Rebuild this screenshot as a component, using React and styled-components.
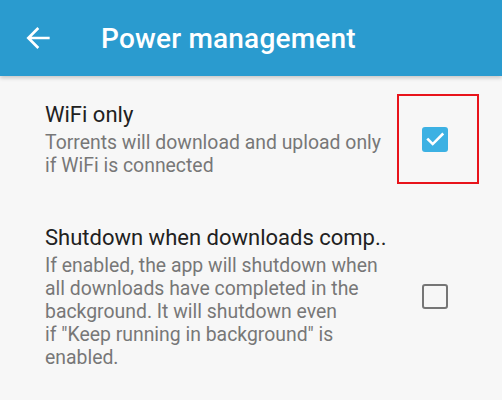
import React from 'react';
import styled, { createGlobalStyle } from 'styled-components';

const GlobalStyle = createGlobalStyle`
  html, body {
    margin: 0;
    padding: 0;
    background-color: #f7f7f7;
    font-family: Roboto, "Noto Sans", sans-serif;
  }
`;

const Screen = styled.div`
  width: 502px;
  height: 400px;
  overflow: hidden;
  background-color: #f7f7f7;
  display: flex;
  flex-direction: column;
`;

const Toolbar = styled.header`
  height: 76px;
  flex-shrink: 0;
  display: flex;
  align-items: center;
  background-color: #2a9bcf;
  box-shadow: 0 2px 4px rgba(0, 0, 0, 0.2);
  position: relative;
  z-index: 1;
`;

const BackButton = styled.div`
  width: 101px;
  display: flex;
  align-items: center;
  padding-left: 23px;
  box-sizing: border-box;
  color: white;
`;

const ToolbarTitle = styled.h1`
  margin: 0;
  font-size: 28px;
  font-weight: 500;
  color: white;
  letter-spacing: 0.2px;
`;

const List = styled.div`
  display: flex;
  flex-direction: column;
`;

const Item = styled.div`
  display: flex;
  align-items: center;
  padding: ${(p) => p.$padding};
`;

const TextColumn = styled.div`
  flex: 1;
  padding-left: 45px;
  display: flex;
  flex-direction: column;
`;

const Title = styled.div`
  font-size: 22px;
  line-height: 27px;
  color: #212121;
`;

const Summary = styled.div`
  font-size: 19.4px;
  line-height: 23px;
  color: #777777;
  white-space: pre-line;
  margin-top: 3px;
`;

const WidgetFrame = styled.div`
  width: 82px;
  height: 90px;
  margin-right: 23px;
  padding-left: 23px;
  display: flex;
  align-items: center;
  box-sizing: border-box;
  border: 2px solid ${(p) => (p.$highlight ? '#e8141b' : 'transparent')};
`;

const Box = styled.div`
  width: 26px;
  height: 25px;
  box-sizing: border-box;
  border-radius: 3px;
  display: flex;
  align-items: center;
  justify-content: center;
  background-color: ${(p) => (p.$checked ? '#3cb1e3' : 'transparent')};
  border: ${(p) => (p.$checked ? 'none' : '2.5px solid #767676')};
`;

const Checkbox = ({ checked }) => (
  <Box $checked={checked}>
    {checked && (
      <svg width="22" height="22" viewBox="0 0 24 24">
        <path d="M4.5 12.5l5 5L20 7" fill="none" stroke="white" strokeWidth="2.8" strokeLinecap="square" />
      </svg>
    )}
  </Box>
);

const App = () => (
  <>
    <GlobalStyle />
    <Screen>
      <Toolbar>
        <BackButton>
          <svg width="32" height="32" viewBox="0 0 24 24">
            <path d="M20 12H4.5M11.5 4.5L4 12l7.5 7.5" fill="none" stroke="white" strokeWidth="2" />
          </svg>
        </BackButton>
        <ToolbarTitle>Power management</ToolbarTitle>
      </Toolbar>
      <List>
        <Item $padding="18px 0 12px">
          <TextColumn>
            <Title>WiFi only</Title>
            <Summary>{'Torrents will download and upload only\nif WiFi is connected'}</Summary>
          </TextColumn>
          <WidgetFrame $highlight>
            <Checkbox checked />
          </WidgetFrame>
        </Item>
        <Item $padding="28px 0 20px">
          <TextColumn>
            <Title>Shutdown when downloads comp..</Title>
            <Summary>
              {'If enabled, the app will shutdown when\nall downloads have completed in the\nbackground. It will shutdown even\nif "Keep running in background" is\nenabled.'}
            </Summary>
          </TextColumn>
          <WidgetFrame>
            <Checkbox />
          </WidgetFrame>
        </Item>
      </List>
    </Screen>
  </>
);

export default App;
